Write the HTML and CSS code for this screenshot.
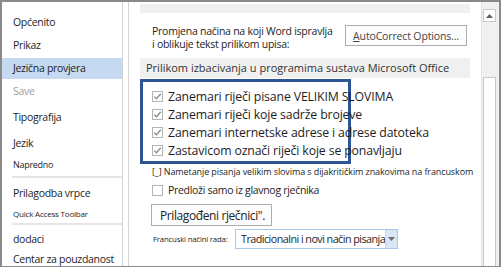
FILE: index.html
```html
<!DOCTYPE html>
<html lang="hr">
<head>
    <meta charset="UTF-8">
    <meta name="viewport" content="width=device-width, initial-scale=1.0">
    <title>Mogućnosti programa Word</title>
    <link rel="stylesheet" href="styles.css">
</head>
<body>
    <div class="window">
        <nav class="nav">
            <div class="nav-item">Općenito</div>
            <div class="nav-item">Prikaz</div>
            <div class="nav-item active">Jezična provjera</div>
            <div class="nav-item muted">Save</div>
            <div class="nav-item item-tall">Tipografija</div>
            <div class="nav-item item-short">Jezik</div>
            <div class="nav-item small">Napredno</div>
            <div class="nav-sep"></div>
            <div class="nav-item">Prilagodba vrpce</div>
            <div class="nav-item tiny">Quick Access Toolbar</div>
            <div class="nav-sep"></div>
            <div class="nav-item item-short">dodaci</div>
            <div class="nav-item item-short">Centar za pouzdanost</div>
        </nav>

        <main class="content">
            <div class="band band-top"></div>

            <div class="autocorrect-row">
                <p class="intro">Promjena načina na koji Word ispravlja<br>i oblikuje tekst prilikom upisa:</p>
                <button class="btn btn-autocorrect"><u>A</u>utoCorrect Options...</button>
            </div>

            <div class="band section-title">Prilikom izbacivanja u programima sustava Microsoft Office</div>

            <div class="highlight-box">
                <label class="check-row">
                    <span class="checkbox">
                        <svg viewBox="0 0 11 11" width="11" height="11"><path d="M2.2 5.6 L4.4 7.8 L8.8 2.8" fill="none" stroke="#8a8a8a" stroke-width="1.3"/></svg>
                    </span>
                    Zanemari riječi pisane VELIKIM SLOVIMA
                </label>
                <label class="check-row">
                    <span class="checkbox">
                        <svg viewBox="0 0 11 11" width="11" height="11"><path d="M2.2 5.6 L4.4 7.8 L8.8 2.8" fill="none" stroke="#8a8a8a" stroke-width="1.3"/></svg>
                    </span>
                    Zanemari riječi koje sadrže brojeve
                </label>
                <label class="check-row">
                    <span class="checkbox">
                        <svg viewBox="0 0 11 11" width="11" height="11"><path d="M2.2 5.6 L4.4 7.8 L8.8 2.8" fill="none" stroke="#8a8a8a" stroke-width="1.3"/></svg>
                    </span>
                    Zanemari internetske adrese i adrese datoteka
                </label>
                <label class="check-row">
                    <span class="checkbox">
                        <svg viewBox="0 0 11 11" width="11" height="11"><path d="M2.2 5.6 L4.4 7.8 L8.8 2.8" fill="none" stroke="#8a8a8a" stroke-width="1.3"/></svg>
                    </span>
                    Zastavicom označi riječi koje se ponavljaju
                </label>
            </div>

            <p class="note">[_] Nametanje pisanja velikim slovima s dijakritičkim znakovima na francuskom</p>

            <label class="check-row plain">
                <span class="checkbox"></span>
                Predloži samo iz glavnog rječnika
            </label>

            <button class="btn btn-dict">Prilagođeni rječnici".</button>

            <div class="mode-row">
                <span class="mode-label">Francuski načini rada:</span>
                <div class="select">
                    <span class="select-value">Tradicionalni i novi način pisanja</span>
                    <span class="select-arrow">
                        <svg viewBox="0 0 7 4" width="7" height="4"><path d="M0 0 H7 L3.5 4 Z" fill="#6d6d6d"/></svg>
                    </span>
                </div>
            </div>
        </main>

        <div class="scrollbar">
            <div class="scroll-btn">
                <svg viewBox="0 0 7 4" width="7" height="4"><path d="M0 4 H7 L3.5 0 Z" fill="#606060"/></svg>
            </div>
            <div class="scroll-thumb"></div>
        </div>
    </div>
</body>
</html>
```

FILE: styles.css
```css
body {
    margin: 0;
    padding: 0;
    background-color: #fff;
    font-family: "Open Sans", "Noto Sans", sans-serif;
    color: #1e1e1e;
}

.window {
    display: flex;
    width: 501px;
    height: 267px;
    box-sizing: border-box;
    border-top: 2px solid #8a8a8a;
    border-left: 2px solid #8a8a8a;
    border-right: 2px solid #8a8a8a;
    border-bottom: 1px solid #8a8a8a;
    overflow: hidden;
}

/* left navigation */

.nav {
    width: 120px;
    flex-shrink: 0;
    padding-top: 9px;
    border-right: 1px solid #d4d4d4;
    font-size: 10.5px;
    letter-spacing: -0.3px;
}

.nav-item {
    height: 23px;
    line-height: 23px;
    padding-left: 11px;
    white-space: nowrap;
}

.nav-item.active {
    background-color: #c5d9f0;
    height: 21px;
    line-height: 21px;
    margin: 1px 0;
}

.nav-item.muted {
    color: #a0a0a0;
}

.nav-item.item-tall {
    height: 30px;
    line-height: 29px;
}

.nav-item.item-short {
    height: 20px;
    line-height: 20px;
}

.nav-item.small {
    font-size: 9px;
}

.nav-item.tiny {
    height: 18px;
    line-height: 18px;
    font-size: 8px;
    letter-spacing: -0.2px;
}

.nav-sep {
    height: 2px;
    margin: 0 0 4px 10px;
    background-color: #e6e6e6;
}

/* right content */

.content {
    flex: 1;
    margin-left: 5px;
    border-left: 1px solid #d4d4d4;
    padding: 2px 0 0 11px;
}

.band {
    width: 330px;
    background-color: #f0f0f0;
}

.band-top {
    height: 9px;
}

.autocorrect-row {
    display: flex;
    align-items: flex-start;
    padding: 12px 0 0 12px;
    height: 33px;
}

.intro {
    margin: 0;
    width: 193px;
    line-height: 13px;
    font-size: 10.5px;
    letter-spacing: -0.25px;
    white-space: nowrap;
}

.btn {
    font-family: inherit;
    background-color: #fdfdfd;
    border: 1px solid #adadad;
    color: #444;
    padding: 0;
    cursor: pointer;
}

.btn-autocorrect {
    width: 122px;
    height: 21px;
    font-size: 10.5px;
    letter-spacing: -0.15px;
}

.section-title {
    height: 20px;
    line-height: 20px;
    padding-left: 6px;
    box-sizing: border-box;
    font-size: 11px;
    color: #333;
}

.highlight-box {
    width: 211px;
    height: 85px;
    margin-top: 1px;
    padding: 5px 0 0 9px;
    border: 3px solid #2f5496;
    box-sizing: border-box;
}

.check-row {
    display: flex;
    align-items: center;
    gap: 5px;
    height: 18px;
    font-size: 12.3px;
    letter-spacing: -0.15px;
    white-space: nowrap;
}

.checkbox {
    width: 11px;
    height: 11px;
    box-sizing: border-box;
    border: 1px solid #b4b4b4;
    background-color: #fff;
    display: flex;
    flex-shrink: 0;
}

.checkbox svg {
    margin: -1px;
}

.note {
    margin: 2px 0 0 12px;
    line-height: 12px;
    font-size: 9px;
    letter-spacing: -0.1px;
    white-space: nowrap;
}

.check-row.plain {
    margin: 3px 0 0 12px;
    font-size: 10.5px;
    letter-spacing: -0.3px;
}

.btn-dict {
    display: block;
    margin: 5px 0 0 11px;
    width: 121px;
    height: 22px;
    text-align: left;
    padding-left: 8px;
    font-size: 12px;
    letter-spacing: -0.4px;
    white-space: nowrap;
    overflow: visible;
    color: #222;
}

.mode-row {
    display: flex;
    align-items: center;
    margin: 3px 0 0 13px;
}

.mode-label {
    width: 82px;
    font-size: 7.8px;
    letter-spacing: -0.2px;
    white-space: nowrap;
}

.select {
    display: flex;
    width: 163px;
    height: 20px;
    box-sizing: border-box;
    border: 1px solid #a9c9ec;
}

.select-value {
    flex: 1;
    padding-left: 5px;
    line-height: 18px;
    font-size: 10.8px;
    letter-spacing: -0.55px;
    white-space: nowrap;
}

.select-arrow {
    width: 13px;
    background-color: #dbe6f4;
    border-left: 1px solid #c3d6ee;
    display: flex;
    align-items: center;
    justify-content: center;
}

/* scrollbar */

.scrollbar {
    width: 17px;
    flex-shrink: 0;
    background-color: #f0f0f0;
    border-left: 1px solid #e3e3e3;
}

.scroll-btn {
    width: 13px;
    height: 13px;
    margin: 7px 0 0 1px;
    box-sizing: border-box;
    border: 1px solid #c8c8c8;
    background-color: #fff;
    display: flex;
    align-items: center;
    justify-content: center;
}

.scroll-thumb {
    width: 13px;
    height: 200px;
    margin: 55px 0 0 1px;
    box-sizing: border-box;
    border: 1px solid #c8c8c8;
    background-color: #fff;
}
```
